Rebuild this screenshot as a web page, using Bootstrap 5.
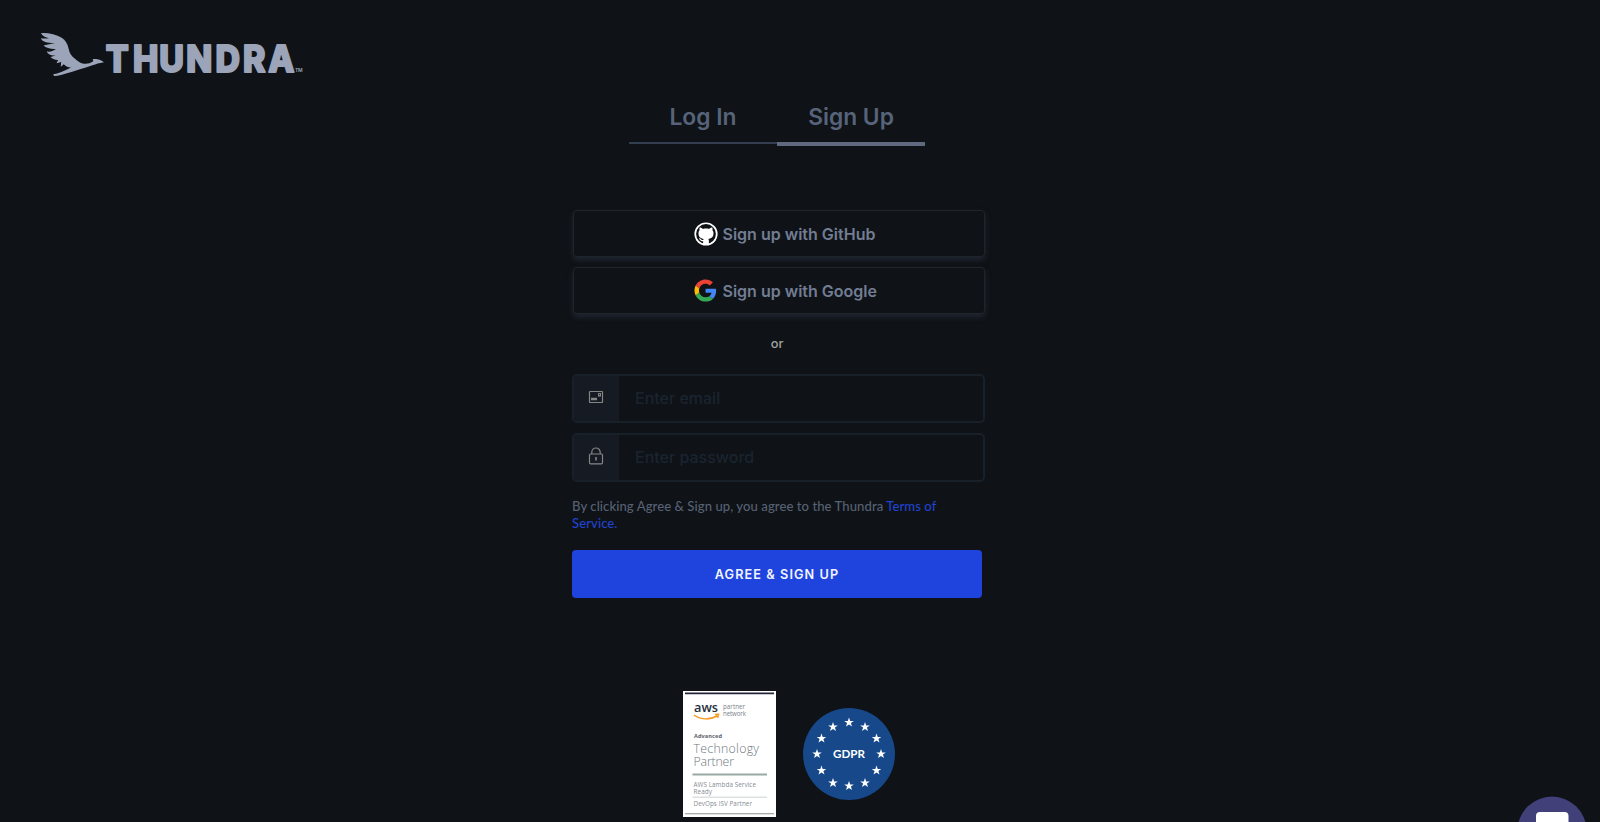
<!DOCTYPE html>
<html lang="en">
<head>
<meta charset="utf-8">
<meta name="viewport" content="width=device-width, initial-scale=1">
<title>Thundra – Sign Up</title>
<link href="https://cdn.jsdelivr.net/npm/bootstrap@5.3.0/dist/css/bootstrap.min.css" rel="stylesheet">
<style>
body{background:#0f1216;font-family:Inter,"Liberation Sans",sans-serif;height:822px;overflow:hidden;position:relative}
.brand-row{height:98px;padding:30px 0 0 38px}
.auth{width:413px;margin-left:572px}
.auth-tabs{width:296px;margin-left:57px;height:48px}
.auth-tabs .nav-link{height:46px;padding:1px 0 0;border-radius:0;color:#56637a;font-size:22.800px;font-weight:600;line-height:35px;text-align:center;border-bottom:2px solid #333d50}
.auth-tabs .nav-link.active{height:48px;border-bottom:4px solid #5f6a80}
.social{margin-top:64px;padding-left:1px;gap:10px}
.social .btn{height:47px;border:1px solid #20242b;border-radius:4px;color:#727d94;background:#0f1216;font-size:16px;font-weight:600;box-shadow:0 3px 6px rgba(62,72,96,.38);padding:1px 0 0 119.500px}
.social svg{margin-right:5px}
.or-text{font-size:12.8px;font-weight:500;line-height:20px;color:#a2a2a2;width:410px;margin-top:20px;margin-bottom:20px}
.field{height:49px;border:2px solid #18212a;border-radius:5px;overflow:hidden;margin-bottom:10px}
.field .input-group-text{width:45px;border:0;border-radius:0;background:#151a23;padding:0 2px 0 0}
.field .form-control{background:transparent;border:0;padding:0 16px 1px 17px;font-size:16px;font-weight:500;color:#727d94}
.field .form-control::placeholder{color:#1a2430;opacity:1}
.terms{font-family:Lato,sans-serif;font-size:13.100px;line-height:17.6px;font-weight:500;color:#566174;letter-spacing:.065px;margin:15.500px 0 17.500px}
.terms a{color:#1f42cf}
.submit{width:410px;height:48px;background:#1f44dd;border:0;border-radius:4px;color:#f2f4ff;font-size:12.700px;font-weight:600;letter-spacing:1.080px}
.partners{margin:93px 0 0 683px;gap:27px}
.chat{position:absolute;left:1516px;top:796px}
</style>
</head>
<body>
<header class="brand-row">
<svg width="270" height="50" viewBox="38 30 270 50" role="img" aria-label="Thundra" class="d-block">
<path fill="#9ba4b8" d="M41 33C48 32.500 56 34.200 61.700 37.700C65.500 40.200 67.800 44 68.700 49C69.500 53.500 71.500 56 75 58.700C78.500 61.500 80.500 63.500 84 63.700C87.500 63.900 90.500 63.300 93.300 61.300L92.700 59C96 59 100 58.800 104 62.200C99 63 96 64 92.500 65.200C84 68 74 71 66 73.600C61 75.300 57 76.300 54 76L53.200 74.200C58 73.600 64 71.400 71 67.500C67.500 67.200 65.500 66 63.800 64.200L60.800 66.800C61 64.600 60.800 63.600 61.300 62L56.500 63.200L58 60C55 60.100 51.500 58.500 50.500 57L55.500 55.500C51.500 56 48 54.800 46.700 51.500C50.500 52 53 51 56 49C51.500 49.500 46 48.200 43.500 45.600L55 43C49 43.200 41.500 42 41 38.300C43.500 38.800 46.500 38.600 49 38.200C45.500 37.600 42.300 36.300 41 33Z"/>
<g fill="#9ba4b8" stroke="#9ba4b8" stroke-width="2" stroke-linejoin="round" font-family="Inter" font-weight="800" font-size="36.500" transform="scale(.93 1)"><text x="113.800 143 171.300 200.300 231.700 261.300 288.400" y="71.800">THUNDRA</text></g>
<text x="295" y="72.400" font-family="Inter" font-size="5" font-weight="600" fill="#9ba4b8" textLength="7.500">TM</text>
</svg>
</header>
<main>
<section class="auth">
<nav class="nav auth-tabs flex-nowrap align-items-start">
<a class="nav-link w-50" href="#">Log In</a>
<a class="nav-link w-50 active" href="#">Sign Up</a>
</nav>
<div class="social d-grid">
<button class="btn d-flex align-items-center" type="button">
<svg width="24" height="24" viewBox="0 0 24 24"><circle cx="12" cy="12" r="11.600" fill="#fff"/><circle cx="12" cy="12" r="9.900" fill="#0f1216"/><path fill="#fff" d="M9.100 22.300V19.300C6.500 19.800 6 17.500 5 16.700C4.600 16.200 5.500 15.900 6.200 16.500C7.100 17.200 7.400 18.400 9.200 17.900C9.300 17.500 9.500 17.200 9.700 16.900C6.600 16.500 4.500 15.200 4.500 11.300C4.500 10 4.900 9.100 5.600 8.300C5.300 7.500 5.300 6.400 5.700 5.600C6.900 5.600 8 6.300 8.900 6.900C10.900 6.500 13.100 6.500 15.100 6.900C16 6.300 17.100 5.600 18.300 5.600C18.700 6.400 18.700 7.500 18.400 8.300C19.100 9.100 19.500 10 19.500 11.300C19.500 15.200 17.400 16.500 14.300 16.900C14.700 17.400 14.900 18 14.900 18.800V22.300Z"/></svg>
<span>Sign up with GitHub</span></button>
<button class="btn d-flex align-items-center" type="button">
<svg width="24" height="24" viewBox="-1 -1 52 52"><path fill="#EA4335" d="M24 9.500c3.540 0 6.710 1.220 9.210 3.600l6.850-6.850C35.900 2.380 30.470 0 24 0 14.620 0 6.510 5.380 2.560 13.220l7.980 6.190C12.430 13.720 17.740 9.500 24 9.500z"/><path fill="#4285F4" d="M46.980 24.550c0-1.570-.15-3.090-.38-4.550H24v9.020h12.940c-.58 2.960-2.260 5.480-4.780 7.180l7.730 6c4.510-4.180 7.090-10.360 7.090-17.650z"/><path fill="#FBBC05" d="M10.530 28.590c-.48-1.450-.76-2.990-.76-4.590s.27-3.140.76-4.590l-7.980-6.190C.92 16.460 0 20.120 0 24c0 3.880.92 7.540 2.560 10.780l7.970-6.190z"/><path fill="#34A853" d="M24 48c6.480 0 11.930-2.130 15.890-5.810l-7.730-6c-2.150 1.450-4.920 2.300-8.160 2.300-6.260 0-11.570-4.220-13.470-9.910l-7.980 6.190C6.510 42.620 14.620 48 24 48z"/></svg>
<span>Sign up with Google</span></button>
</div>
<div class="or-text text-center">or</div>
<form>
<div class="input-group field flex-nowrap">
<span class="input-group-text justify-content-center"><svg width="16" height="14" viewBox="0 0 16 14" fill="none" stroke="#858585" class="mb-1"><rect x="1.500" y="1.500" width="13" height="11" rx=".6" stroke-width="1.200"/><rect x="10.500" y="3.500" width="2" height="2.500"/><path d="M3 9h6" stroke-width="2.500"/></svg></span>
<input class="form-control shadow-none" type="email" placeholder="Enter email" aria-label="Email">
</div>
<div class="input-group field flex-nowrap">
<span class="input-group-text justify-content-center"><svg width="16" height="18" viewBox="0 0 16 18" fill="none" stroke="#858585" stroke-width="1.200" class="mb-1"><rect x="1.500" y="7" width="13" height="9.800" rx="1"/><path d="M3.800 7V5.200a4.200 4.200 0 0 1 8.400 0V7"/><path d="M8 10v3.500" stroke-width="1.600"/></svg></span>
<input class="form-control shadow-none" type="password" placeholder="Enter password" aria-label="Password">
</div>
<p class="terms">By clicking Agree &amp; Sign up, you agree to the Thundra <a class="text-decoration-none" href="#">Terms of<br>Service.</a></p>
<button class="btn submit" type="button">AGREE &amp; SIGN UP</button>
</form>
</section>
<section class="partners d-flex align-items-center">
<svg width="93" height="126" viewBox="0 0 93 126">
<rect width="93" height="126" fill="#fff"/><path fill="#20263a" d="M2 1.500h89v1.800H2z"/>
<g font-family="Open Sans"><text x="11" y="20.500" font-size="12.500" font-weight="600" fill="#232f3e" textLength="24" lengthAdjust="spacingAndGlyphs">aws</text>
<path fill="none" stroke="#f7981d" stroke-width="1.500" d="M11 24c7 5 16 5 23 1M32 23.500l3.500-.2-.9 3.500"/>
<g fill="#7b8188" font-size="6.200"><text x="40" y="18" textLength="22">partner</text><text x="40" y="24.500" textLength="23">network</text></g>
<text x="11" y="46.500" font-size="5.600" font-weight="700" fill="#596069" textLength="28">Advanced</text>
<g fill="#6f7780" font-size="12.300" font-weight="300"><text x="10.500" y="61.500" textLength="65.500">Technology</text><text x="10.500" y="74.500" textLength="40.500">Partner</text></g>
<path fill="#99aaa4" d="M9.500 82.500H84v2H9.500z"/>
<g fill="#868c93" font-size="6.300"><text x="10.500" y="95.500" textLength="62.500">AWS Lambda Service</text><text x="10.500" y="102.700" textLength="18.500">Ready</text><text x="10.500" y="114.500" textLength="58.500">DevOps ISV Partner</text></g></g>
<path fill="#dce2e0" d="M9.500 105.500H84v1.500H9.500z"/><path fill="#8b9092" d="M2 122.300h89v1H2z"/>
</svg>
<svg width="92" height="92" viewBox="-46 -46 92 92">
<defs><path id="star" fill="#fff" d="M0-5L1.200-1.600 4.800-1.500 1.900.6 3 4 0 2-3 4-1.900.6-4.800-1.500-1.200-1.600Z"/></defs>
<circle r="46" fill="#16488a"/>
<use href="#star" y="-31.500"/><use href="#star" x="16" y="-27"/><use href="#star" x="27.500" y="-15.500"/><use href="#star" x="32"/><use href="#star" x="27.500" y="16.500"/><use href="#star" x="16" y="29"/><use href="#star" y="32"/><use href="#star" x="-16" y="29"/><use href="#star" x="-27.500" y="16.500"/><use href="#star" x="-32"/><use href="#star" x="-27.500" y="-15.500"/><use href="#star" x="-16" y="-27"/>
<text x="-16" y="4.300" font-family="Lato" font-weight="700" font-size="11.800" fill="#fff" textLength="32" lengthAdjust="spacingAndGlyphs">GDPR</text>
</svg>
</section>
</main>
<svg class="chat" width="70" height="26" viewBox="0 0 70 26"><circle cx="36" cy="35" r="34.500" fill="#424079"/><rect x="20" y="16" width="32.500" height="30" rx="4" fill="#fff"/></svg>
<script src="https://cdn.jsdelivr.net/npm/bootstrap@5.3.0/dist/js/bootstrap.bundle.min.js"></script>
</body>
</html>
